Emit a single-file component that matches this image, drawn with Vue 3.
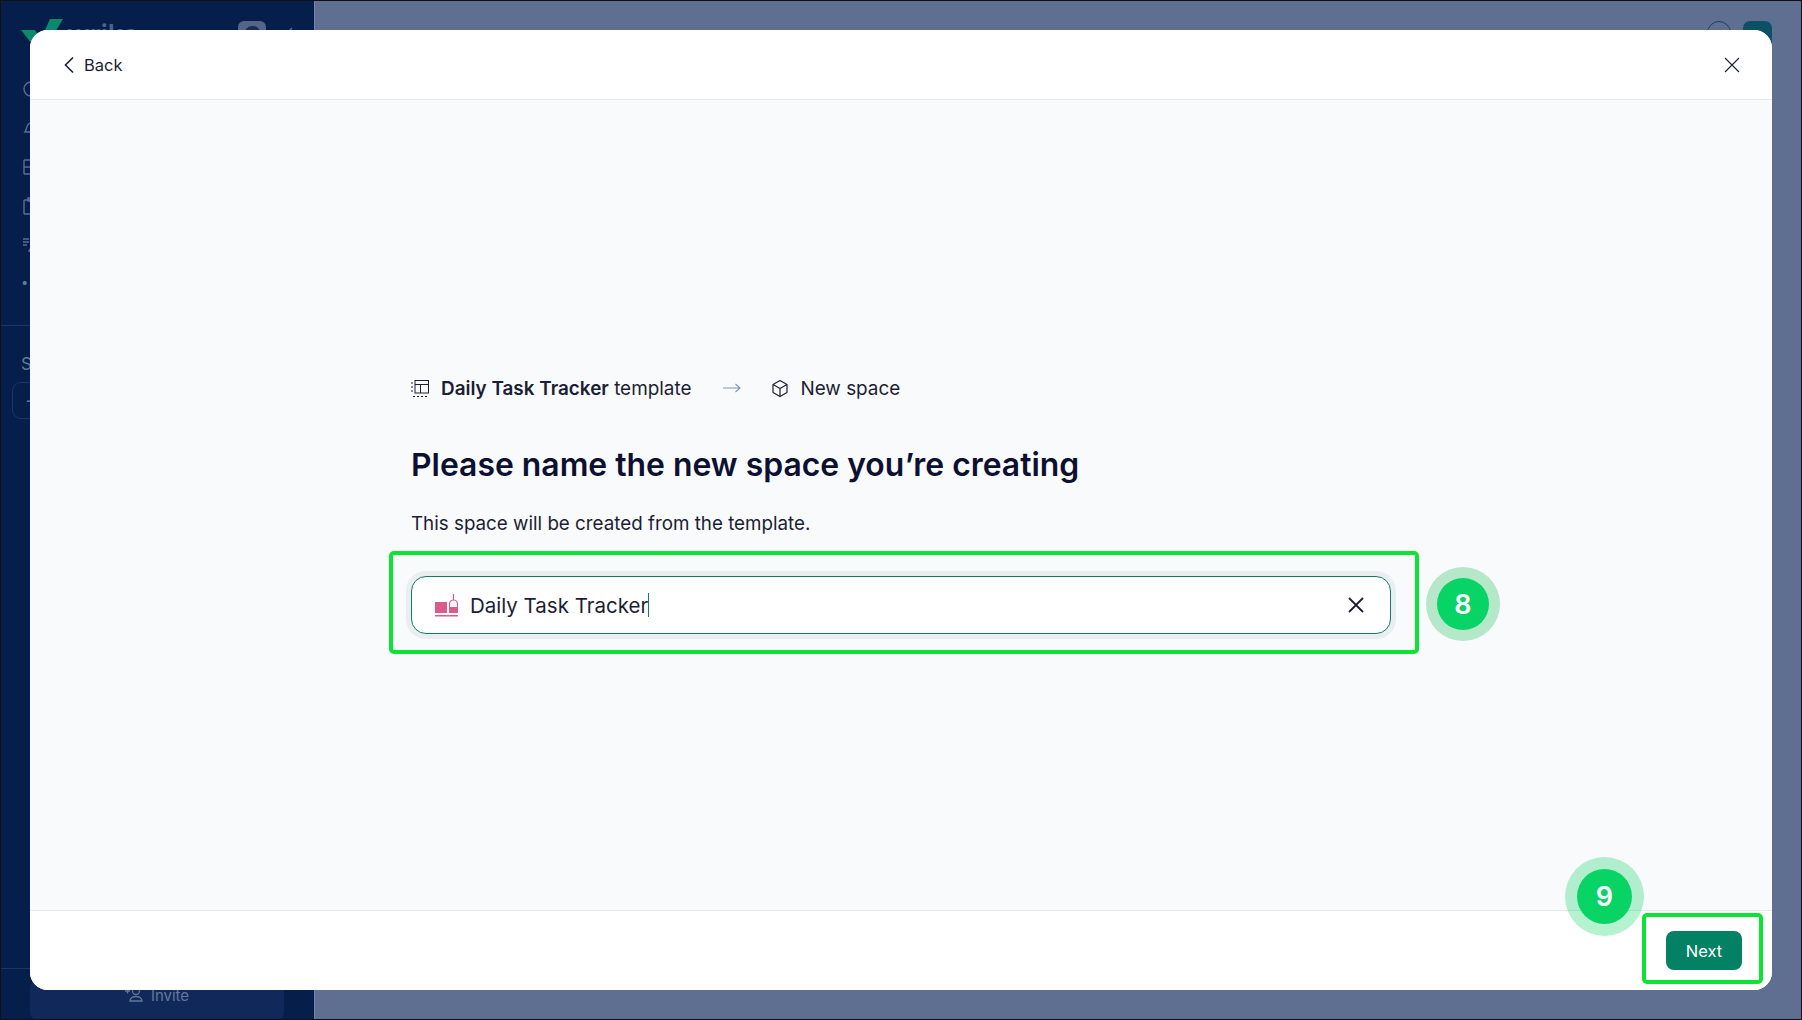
<template>
  <div class="screen">
    <!-- app behind the dialog, dimmed -->
    <aside class="sidebar">
      <div class="logo-row">
        <svg class="logo" width="42" height="30" viewBox="0 0 42 30"><path d="M0 11h14l6 9L29 0h13L24 30h-9z" fill="#0a8a68" /></svg>
        <span class="logo-text">wrike</span>
        <span class="avatar"><i></i></span>
        <svg class="collapse" width="10" height="14" viewBox="0 0 10 14" fill="none" stroke="#5a6d92" stroke-width="1.400"><path d="M8 1 2 7l6 6" /></svg>
      </div>
      <div class="side-icons">
        <svg width="20" height="20" viewBox="0 0 20 20" fill="none" stroke="#5a6d92" stroke-width="1.4"><circle cx="10" cy="10" r="7" /></svg>
        <svg width="20" height="20" viewBox="0 0 20 20" fill="none" stroke="#5a6d92" stroke-width="1.4"><path d="M4 14c2-2 1-9 6-9s4 7 6 9z" /></svg>
        <svg width="20" height="20" viewBox="0 0 20 20" fill="none" stroke="#5a6d92" stroke-width="1.4"><rect x="3" y="3" width="14" height="14" rx="1" /><path d="M3 10h14M10 3v14" /></svg>
        <svg width="20" height="20" viewBox="0 0 20 20" fill="none" stroke="#5a6d92" stroke-width="1.4"><rect x="3" y="4" width="14" height="14" rx="1" /><path d="M7 2h6v3H7z" /></svg>
        <svg width="20" height="20" viewBox="0 0 20 20" fill="none" stroke="#5a6d92" stroke-width="1.4"><path d="M2 4h6M2 7h6M2 10h4M10 5h6M8 16l4-7 4 7z" /></svg>
        <span class="dots">•••</span>
      </div>
      <hr class="side-line" />
      <div class="side-label">Spaces</div>
      <div class="side-add">+</div>
      <div class="side-bottom">
        <div class="invite">
          <svg width="18" height="16" viewBox="0 0 18 16" fill="none" stroke="#64779b" stroke-width="1.3"><path d="M0 5h5M2.5 2.500v5" /><circle cx="11" cy="5" r="3.500" /><path d="M5 15c0-6 12-6 12 0z" /></svg>
          Invite
        </div>
      </div>
    </aside>
    <main class="backdrop">
      <div class="top-icons">
        <span class="help"></span>
        <span class="user"></span>
      </div>
    </main>

    <section class="dialog">
      <header class="dialog-head">
        <button class="back">
          <svg width="14" height="20" viewBox="0 0 14 20" fill="none" stroke="#1c1e33" stroke-width="1.600"><path d="M11 2.500 3.500 10l7.500 7.500" /></svg>
          Back
        </button>
        <svg class="close" width="18" height="18" viewBox="0 0 18 18" fill="none" stroke="#1c1e33" stroke-width="1.100"><path d="M2 2l14 14M16 2 2 16" /></svg>
      </header>

      <div class="dialog-body">
        <div class="form">
          <div class="crumbs">
            <span class="crumb">
              <svg width="19" height="19" viewBox="0 0 19 19" fill="none" stroke="#1c1e33" stroke-width="1">
                <rect x="4" y="1.500" width="13.500" height="12.500" />
                <path d="M4 5.500h13.500M9.500 5.500V14" />
                <path d="M1 3v2M1 7v2M1 11v2M2 17.500h2M6 17.500h2M10 17.500h2M14 17.500h2" />
              </svg>
              <span><b>Daily Task Tracker</b> template</span>
            </span>
            <svg class="arrow" width="18" height="10" viewBox="0 0 18 10" fill="none" stroke="#8592b0" stroke-width="1.100"><path d="M0 5h17M12.500 1l4.500 4-4.500 4" /></svg>
            <span class="crumb">
              <svg width="18" height="19" viewBox="0 0 18 19" fill="none" stroke="#1c1e33" stroke-width="1.200" stroke-linejoin="round">
                <path d="M9 1.500l7 4v8l-7 4-7-4v-8z" />
                <path d="M2 5.500l7 4 7-4M9 9.500v8" />
              </svg>
              <span>New space</span>
            </span>
          </div>

          <h1>Please name the new space you’re creating</h1>
          <p>This space will be created from the template.</p>

          <div class="field">
            <svg width="23" height="23" viewBox="0 0 23 23" fill="#d95c8a">
              <rect x="0" y="8" width="12" height="11" />
              <rect x="14" y="13" width="9" height="6" />
              <path d="M14.500 13v-3a4 4 0 0 1 8 0v3M18.500 6V0" fill="none" stroke="#d95c8a" stroke-width="1.200" />
              <rect x="0" y="21" width="23" height="1.500" />
            </svg>
            <span class="field-text">Daily Task Tracker</span><span class="caret"></span>
            <svg class="clear" width="18" height="18" viewBox="0 0 18 18" fill="none" stroke="#1c1e33" stroke-width="1.800"><path d="M2 2l14 14M16 2 2 16" /></svg>
          </div>
        </div>
      </div>

      <footer class="dialog-foot">
        <button class="next">Next</button>
      </footer>
    </section>

    <!-- tutorial annotations over the dialog -->
    <div class="mark mark-field"></div>
    <div class="mark mark-next"></div>
    <div class="step step-8">8</div>
    <div class="step step-9">9</div>
  </div>
</template>

<style>
html, body { margin: 0; background: #111; }
</style>

<style scoped>
.screen {
  position: relative;
  display: flex;
  width: 1800px;
  height: 1018px;
  margin: 1px;
  overflow: hidden;
  font-family: Inter, "Liberation Sans", sans-serif;
  color: #1c1e33;
}
.sidebar {
  width: 313px;
  flex: none;
  display: flex;
  flex-direction: column;
  background: #051f4a;
  color: #64779b;
  box-sizing: border-box;
  padding: 18px 0 0 20px;
}
.logo-row { display: flex; align-items: center; height: 30px; }
.logo-text { margin-left: 4px; font-size: 27px; font-weight: 600; color: #4f6185; }
.avatar {
  display: flex;
  align-items: center;
  justify-content: center;
  width: 28px;
  height: 26px;
  margin-left: 100px;
  border-radius: 6px;
  background: #54658a;
}
.avatar i { width: 17px; height: 17px; border-radius: 50%; background: #1c2c4d; }
.collapse { margin-left: 18px; }
.side-icons {
  display: flex;
  flex-direction: column;
  gap: 19px;
  margin-top: 30px;
}
.dots { font-size: 13px; letter-spacing: 2px; line-height: 16px; }
.side-line { margin: 35px 0 0 -20px; border: 0; border-top: 1px solid #1d3560; }
.side-label { margin-top: 28px; font-size: 17px; line-height: 20px; }
.side-add {
  width: 120px;
  height: 37px;
  margin: 8px 0 0 -9px;
  padding-left: 12px;
  box-sizing: border-box;
  border: 1px solid #1d3560;
  border-radius: 9px;
  font-size: 20px;
  line-height: 34px;
}
.side-bottom {
  margin: auto 0 0 -20px;
  height: 50px;
  border-top: 1px solid #1d3560;
  padding-left: 29px;
  padding-right: 30px;
}
.invite {
  height: 40px;
  margin-top: 11px;
  padding-top: 6px;
  box-sizing: border-box;
  display: flex;
  justify-content: center;
  gap: 8px;
  border-radius: 8px;
  background: #10295a;
  font-size: 15px;
  line-height: 20px;
}
.backdrop { flex: 1; position: relative; background: #5f6f91; border-left: 1px solid #7483a2; }
.top-icons { display: flex; justify-content: flex-end; gap: 12px; padding: 20px 29px 0 0; }
.help { width: 24px; height: 24px; border: 1.500px solid #223a66; border-radius: 50%; box-sizing: border-box; }
.user { width: 29px; height: 29px; border-radius: 7px; background: #0b5064; }

.dialog {
  position: absolute;
  left: 29px;
  top: 29px;
  width: 1742px;
  height: 960px;
  display: flex;
  flex-direction: column;
  background: #f9fafc;
  border-radius: 18px;
  overflow: hidden;
}
.dialog-head {
  height: 70px;
  flex: none;
  display: flex;
  align-items: center;
  justify-content: space-between;
  padding: 0 31px 0 32px;
  box-sizing: border-box;
  background: #fff;
  border-bottom: 1px solid #e4e8f0;
}
.back {
  display: flex;
  align-items: center;
  gap: 8px;
  padding: 0;
  border: 0;
  background: none;
  color: #1c1e33;
  font: 400 16.500px Inter, "Liberation Sans", sans-serif;
}
.dialog-body { flex: 1; padding: 275px 0 0 381px; box-sizing: border-box; }
.form { width: 980px; }
.crumbs { display: flex; align-items: center; height: 26px; font-size: 18.900px; color: #1c1e33; }
.crumb { display: flex; align-items: center; gap: 11px; }
.crumb b { font-weight: 600; }
.arrow { margin: 0 30px 0 32px; }
h1 {
  margin: 42px 0 0;
  font-size: 31.900px;
  line-height: 44px;
  font-weight: 600;
  color: #0d1030;
}
p { margin: 24px 0 0; font-size: 18.800px; line-height: 26px; }
.field {
  display: flex;
  align-items: center;
  width: 980px;
  height: 58px;
  margin-top: 39px;
  padding: 0 25px 0 23px;
  box-sizing: border-box;
  background: #fff;
  border: 1px solid #0f7e62;
  border-radius: 15px;
  box-shadow: 0 0 0 5px #e9eef1;
}
.field-text { margin-left: 12px; font-size: 20.500px; color: #1c1e33; }
.caret { width: 1px; height: 24px; background: #0f7e62; }
.clear { margin-left: auto; }
.dialog-foot {
  height: 80px;
  flex: none;
  display: flex;
  justify-content: flex-end;
  align-items: flex-start;
  padding: 20px 30px 0 0;
  box-sizing: border-box;
  background: #fff;
  border-top: 1px solid #e4e8f0;
}
.next {
  width: 76px;
  height: 39px;
  border: 0;
  border-radius: 8px;
  background: #038164;
  color: #fff;
  font: 400 16.500px Inter, "Liberation Sans", sans-serif;
}

.mark {
  position: absolute;
  box-sizing: border-box;
  border: 4px solid #0ce433;
  border-radius: 5px;
}
.mark-field { left: 388px; top: 550px; width: 1030px; height: 103px; }
.mark-next { left: 1641px; top: 912px; width: 121px; height: 71px; }
.step {
  position: absolute;
  display: flex;
  align-items: center;
  justify-content: center;
  border-radius: 50%;
  background: #08d465;
  color: #fff;
  font-size: 27px;
  font-weight: 600;
}
.step-8 { left: 1436px; top: 577px; width: 52px; height: 52px; box-shadow: 0 0 0 11px #b4e8c9; }
.step-9 { left: 1576px; top: 868px; width: 55px; height: 55px; box-shadow: 0 0 0 12px rgba(8, 212, 101, 0.3); }
</style>
